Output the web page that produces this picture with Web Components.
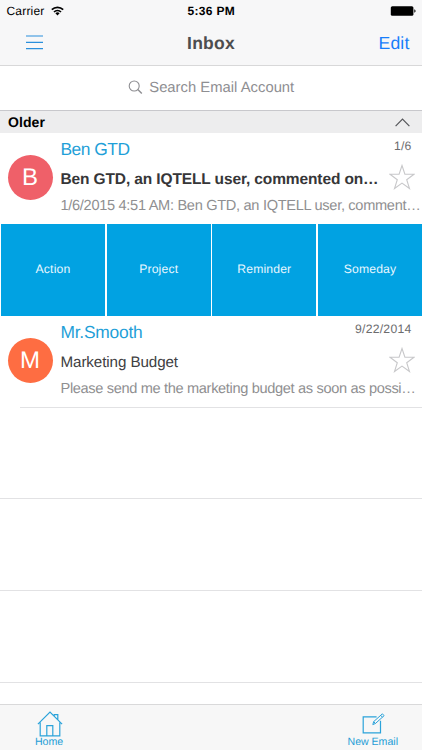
<!DOCTYPE html>
<html lang="en">
<head>
<meta charset="utf-8">
<title>Inbox</title>
<style>
html,body{margin:0;height:100%;background:#fff}
body{font-family:"Liberation Sans",Arial,sans-serif;overflow:hidden;text-rendering:geometricPrecision}
</style>
</head>
<body>
<mail-app></mail-app>
<script>
const define = (name, html, setup) => customElements.define(name, class extends HTMLElement {
  connectedCallback() {
    if (this.shadowRoot) return;
    const t = document.createElement('template');
    t.innerHTML = html;
    this.attachShadow({mode: 'open'}).append(t.content.cloneNode(true));
    if (setup) setup(this);
  }
});

// Single line label whose tracking adjusts so that it spans its given width.
define('fit-label', `<style>
:host{display:block;flex:none;white-space:nowrap}
span{display:inline-block;white-space:pre}
</style><span></span>`, el => {
  const s = el.shadowRoot.querySelector('span');
  const text = el.getAttribute('text');
  const w = +el.getAttribute('w');
  s.textContent = text;
  el.style.width = w + 'px';
  s.style.letterSpacing = (w - s.getBoundingClientRect().width) / text.length + 'px';
});

define('status-bar', `<style>
:host{display:grid;grid-template-columns:1fr auto 1fr;align-items:center;height:22px;padding:0 6px 0 6.5px;font-size:12px;line-height:22px;color:#000}
.l{display:flex;align-items:center;gap:6px}
.l svg{margin-top:-1px}
.t{font-weight:bold}
.b{justify-self:end}
svg{display:block}
</style>
<div class="l"><fit-label text="Carrier" w="38"></fit-label>
<svg width="13" height="10" viewBox="0 0 13 10"><g fill="none" stroke="#000" stroke-width="1.7"><path d="M.8 3.7a8.2 8.2 0 0 1 11.4 0"/><path d="M3 6a5 5 0 0 1 7 0"/></g><path d="M4.4 7.3a3 3 0 0 1 4.2 0L6.5 9.5z"/></svg></div>
<fit-label class="t" text="5:36 PM" w="47.5"></fit-label>
<svg class="b" width="26" height="10" viewBox="0 0 26 10"><rect x=".8" y=".2" width="22.6" height="9.6" rx="1.5"/><path d="M24.3 3.2q1.3.6 1.3 1.8t-1.3 1.8z"/></svg>`);

define('nav-bar', `<style>
:host{display:grid;grid-template-columns:1fr auto 1fr;align-items:center;box-sizing:border-box;height:44px;padding:0 12.5px;line-height:43px;border-bottom:1px solid #d8d8d9}
.m{margin:-3px 0 0 13px}
.t{font-size:17.5px;font-weight:bold;color:#4d4d4f}
.e{font-size:17.6px;color:#177efb;justify-self:end}
svg{display:block}
</style>
<svg class="m" width="17" height="15" viewBox="0 0 17 15"><path d="M0 1h17M0 7.3h17M0 13.6h17" stroke="#2a8fdc" stroke-width="1.2"/></svg>
<fit-label class="t" text="Inbox" w="48"></fit-label>
<fit-label class="e" text="Edit" w="31"></fit-label>`);

define('search-bar', `<style>
:host{display:flex;align-items:center;justify-content:center;gap:6.5px;box-sizing:border-box;height:44.5px;background:#fff;border-bottom:1.5px solid #c8c8cc;font-size:14.8px;color:#8e8e92;line-height:43px}
fit-label{padding-top:1px}
svg{display:block}
</style>
<svg width="15" height="15" viewBox="0 0 15 15" fill="none" stroke="#8e8e92"><circle cx="6.2" cy="6" r="5" stroke-width="1.1"/><path d="M9.8 9.6l4 4" stroke-width="1.4"/></svg>
<fit-label text="Search Email Account" w="145"></fit-label>`);

define('section-header', `<style>
:host{display:flex;align-items:center;justify-content:space-between;height:22.5px;padding:0 12.5px 0 8px;background:#ededee;color:#000;font-size:14px;font-weight:bold;line-height:22.5px}
svg{display:block;margin-top:2px}
</style>
<fit-label text="Older" w="37"></fit-label>
<svg width="15" height="9" viewBox="0 0 15 9"><path d="M.6 8.2l6.9-7 6.9 7" fill="none" stroke="#55565a" stroke-width="1.2"/></svg>`);

define('round-avatar', `<style>
:host{display:flex;align-items:center;justify-content:center;width:45px;height:45px;border-radius:50%;color:#fff;font-size:24px;line-height:45px}
</style><slot></slot>`, el => { el.style.background = el.getAttribute('tint'); });

define('star-toggle', `<style>:host{display:block;width:26px;height:26px}svg{display:block}</style>
<svg width="26" height="26" viewBox="0 0 26 26"><path d="M13 1.5l2.9 8.7h9.1l-7.3 5.5 2.8 8.8-7.5-5.4-7.5 5.4 2.8-8.8L1 10.2h9.1z" fill="none" stroke="#c8c8ca" stroke-width="1.1"/></svg>`);

define('mail-row', `<style>
:host{display:grid;grid-template-columns:52.5px 1fr;column-gap:8px;box-sizing:border-box;height:91px;background:#fff;overflow:hidden}
.a{padding:22px 0 0 7.5px}
.body{display:grid;grid-template-rows:31px 30px 24px;min-width:0}
.top,.mid{display:flex;justify-content:space-between}
star-toggle{margin:-.5px 7px 0 0}
::slotted([slot=from]){font-size:17.4px;line-height:32px;color:#1f9fd8}
::slotted([slot=date]){font-size:12.2px;line-height:26px;color:#6c6c6e;margin-right:10.5px}
::slotted([slot=subject]){font-size:15.2px;line-height:31px;color:#404042}
::slotted([slot=preview]){font-size:14.6px;line-height:25px;color:#8f8f91}
:host([unread]) ::slotted([slot=subject]){font-size:15.5px;font-weight:bold;color:#363638}
</style>
<div class="a"><slot name="avatar"></slot></div>
<div class="body"><div class="top"><slot name="from"></slot><slot name="date"></slot></div><div class="mid"><slot name="subject"></slot><star-toggle></star-toggle></div><slot name="preview"></slot></div>`);

define('action-strip', `<style>
:host{display:grid;grid-template-columns:repeat(4,1fr);gap:1.6px;height:92px;padding-left:1px;background:#fff;font-size:12.2px;color:#e8f7ff}
div{display:flex;align-items:center;justify-content:center;background:#01a2e2;line-height:16px;padding-bottom:3px}
</style>
<div><fit-label text="Action" w="35"></fit-label></div>
<div><fit-label text="Project" w="39"></fit-label></div>
<div><fit-label text="Reminder" w="54"></fit-label></div>
<div><fit-label text="Someday" w="52.5"></fit-label></div>`);

define('empty-rows', `<style>
:host{display:flex;flex-direction:column;flex:1;min-height:0;overflow:hidden}
div{flex:none;box-sizing:border-box;height:91.7px;border-top:1px solid #e2e2e4}
.first{margin-left:20px;height:91.4px}
</style><div class="first"></div><div></div><div></div><div></div>`);

define('tab-item', `<style>
:host{display:flex;flex-direction:column;align-items:center}
::slotted(svg){display:block}
</style><slot></slot>`);

define('tool-bar', `<style>
:host{display:flex;justify-content:space-between;box-sizing:border-box;height:46px;padding:6px 24px 0 35px;border-top:1px solid #d9d9da;background:#f7f7f7;color:#1e9dd6;font-size:10.6px;line-height:11px}
svg{fill:none;stroke:#2ba3da;stroke-width:1.2}
.h{margin-left:2px}.n{margin-left:1px}
</style>
<tab-item><svg class="h" width="26" height="26" viewBox="0 0 26 26"><path d="M.9 13.2L13 1l12.1 12.2M3.2 11.4v13.4h19.6V11.4M9.8 24.8V14.6h6v10.2M17.3 4.8V3.6h3.5v5"/></svg><fit-label text="Home" w="28"></fit-label></tab-item>
<tab-item><svg class="n" width="24" height="26" viewBox="0 0 24 26"><path d="M15.6 5.8H2.2v16h17.3v-12"/><path d="M11.8 13.6l.9-3 8.7-7.8 1.7 1.9-8.7 7.8zM12.7 10.6l1.7 1.9M19.7 4.3l1.7 1.9" stroke-width="1"/></svg><fit-label text="New Email" w="50.5"></fit-label></tab-item>`);

define('mail-app', `<style>
:host{display:flex;flex-direction:column;width:422px;height:750px;background:#fff;overflow:hidden}
header{background:#f7f7f8}
</style>
<header><status-bar></status-bar><nav-bar></nav-bar></header>
<search-bar></search-bar>
<section-header></section-header>
<mail-row unread>
<round-avatar slot="avatar" tint="#ef6069">B</round-avatar>
<fit-label slot="from" text="Ben GTD" w="69"></fit-label>
<fit-label slot="date" text="1/6" w="17.5"></fit-label>
<fit-label slot="subject" text="Ben GTD, an IQTELL user, commented on…" w="318"></fit-label>
<fit-label slot="preview" text="1/6/2015 4:51 AM: Ben GTD, an IQTELL user, comment…" w="360"></fit-label>
</mail-row>
<action-strip></action-strip>
<mail-row>
<round-avatar slot="avatar" tint="#fe6d42">M</round-avatar>
<fit-label slot="from" text="Mr.Smooth" w="82"></fit-label>
<fit-label slot="date" text="9/22/2014" w="56.5"></fit-label>
<fit-label slot="subject" text="Marketing Budget" w="117.5"></fit-label>
<fit-label slot="preview" text="Please send me the marketing budget as soon as possi…" w="355"></fit-label>
</mail-row>
<empty-rows></empty-rows>
<tool-bar></tool-bar>`);
</script>
</body>
</html>
